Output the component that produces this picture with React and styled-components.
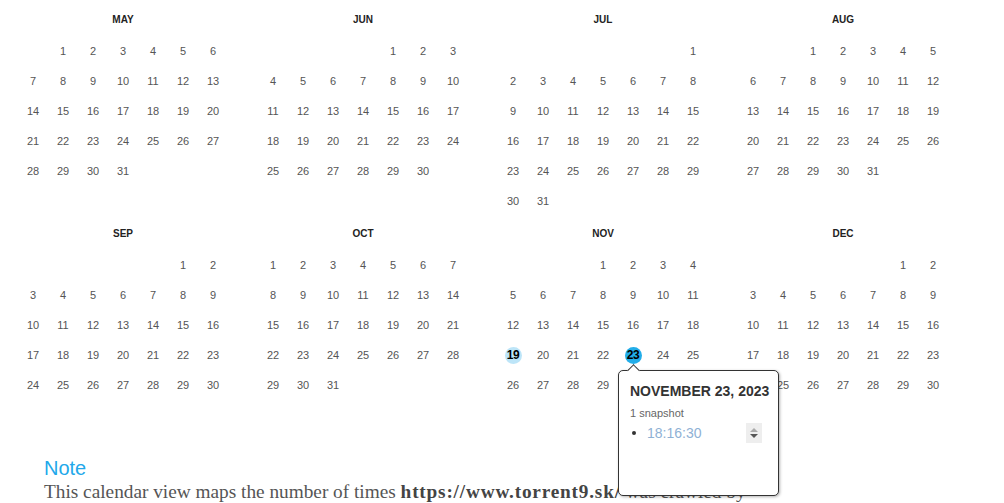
import React from 'react';
import styled, { createGlobalStyle } from 'styled-components';

const GlobalStyle = createGlobalStyle`
  body {
    margin: 0;
    background: #fff;
    font-family: "Liberation Sans", Arial, sans-serif;
  }
`;

const Page = styled.div`
  width: 1004px;
  height: 503px;
  overflow: hidden;
`;

const YearGrid = styled.div`
  display: grid;
  grid-template-columns: repeat(4, 240px);
  row-gap: 10px;
  padding: 12px 0 0 3px;
`;

const Month = styled.div`
  display: flex;
  flex-direction: column;
  align-items: center;
`;

const MonthTitle = styled.div`
  font-size: 10px;
  line-height: 16px;
  font-weight: bold;
  color: #222;
  margin-bottom: 8px;
`;

const Days = styled.div`
  display: grid;
  grid-template-columns: repeat(7, 30px);
  grid-auto-rows: 30px;
  height: 180px;
`;

const Day = styled.div`
  position: relative;
  display: flex;
  align-items: center;
  justify-content: center;
  font-size: 11px;
  color: #555;
`;

const Dot = styled.span`
  display: flex;
  align-items: center;
  justify-content: center;
  width: 17px;
  height: 17px;
  border-radius: 50%;
  background: ${p => (p.$strong ? '#22ade9' : '#bde5f8')};
  color: #000;
  font-weight: bold;
  font-size: 12px;
  letter-spacing: -0.3px;
`;

const Tooltip = styled.div`
  position: absolute;
  left: 0;
  top: 30px;
  z-index: 5;
  box-sizing: border-box;
  width: 161px;
  height: 126px;
  padding: 12px 16px 0 11px;
  background: #fff;
  border: 1px solid #333;
  border-radius: 5px;
  box-shadow: 1px 1px 3px rgba(0, 0, 0, 0.3);

  &::before {
    content: '';
    position: absolute;
    left: 10px;
    top: -5px;
    width: 8px;
    height: 8px;
    background: #fff;
    border-left: 1px solid #333;
    border-top: 1px solid #333;
    transform: rotate(45deg);
  }
`;

const TipTitle = styled.div`
  font-size: 14px;
  line-height: 16px;
  font-weight: bold;
  color: #333;
  white-space: nowrap;
`;

const TipCount = styled.div`
  margin-top: 7px;
  font-size: 11px;
  line-height: 14px;
  color: #666;
`;

const SnapRow = styled.div`
  display: flex;
  align-items: center;
  margin-top: 3px;
  height: 20px;
`;

const Bullet = styled.span`
  width: 4px;
  height: 4px;
  border-radius: 50%;
  background: #333;
  margin: 0 11px 0 2px;
`;

const SnapLink = styled.span`
  font-size: 14px;
  color: #8fb1d5;
  flex: 1;
`;

const Spinner = styled.div`
  width: 16px;
  height: 20px;
  background: #eee;
  display: flex;
  flex-direction: column;
  align-items: center;
  justify-content: center;
  gap: 2px;
`;

const Arrow = styled.span`
  width: 0;
  height: 0;
  border-left: 4px solid transparent;
  border-right: 4px solid transparent;
  ${p => (p.$up
    ? 'border-bottom: 4px solid #aaa;'
    : 'border-top: 4px solid #555;')}
`;

const Note = styled.div`
  padding: 27px 0 0 44px;
`;

const NoteTitle = styled.div`
  font-size: 20px;
  line-height: 23px;
  color: #22a8ea;
`;

const NoteText = styled.p`
  margin: 0;
  width: 716px;
  font-family: "Liberation Serif", "Times New Roman", serif;
  font-size: 19.3px;
  line-height: 24px;
  color: #555;

  b {
    color: #444;
    letter-spacing: 0.8px;
  }
`;

const MONTHS = ['JAN', 'FEB', 'MAR', 'APR', 'MAY', 'JUN', 'JUL', 'AUG', 'SEP', 'OCT', 'NOV', 'DEC'];

const captures = {
  '10-19': { strong: false },
  '10-23': { strong: true, tooltip: true },
};

const MonthCalendar = ({ month }) => {
  const first = new Date(2023, month, 1).getDay();
  const count = new Date(2023, month + 1, 0).getDate();
  const cells = [];
  for (let i = 0; i < first; i++) cells.push(<Day key={`e${i}`} />);
  for (let d = 1; d <= count; d++) {
    const cap = captures[`${month}-${d}`];
    cells.push(
      <Day key={d}>
        {cap ? <Dot $strong={cap.strong}>{d}</Dot> : d}
        {cap && cap.tooltip && (
          <Tooltip>
            <TipTitle>NOVEMBER 23, 2023</TipTitle>
            <TipCount>1 snapshot</TipCount>
            <SnapRow>
              <Bullet />
              <SnapLink>18:16:30</SnapLink>
              <Spinner>
                <Arrow $up />
                <Arrow />
              </Spinner>
            </SnapRow>
          </Tooltip>
        )}
      </Day>
    );
  }
  return (
    <Month>
      <MonthTitle>{MONTHS[month]}</MonthTitle>
      <Days>{cells}</Days>
    </Month>
  );
};

const App = () => (
  <Page>
    <GlobalStyle />
    <YearGrid>
      {[4, 5, 6, 7, 8, 9, 10, 11].map(m => (
        <MonthCalendar key={m} month={m} />
      ))}
    </YearGrid>
    <Note>
      <NoteTitle>Note</NoteTitle>
      <NoteText>
        This calendar view maps the number of times <b>https://www.torrent9.sk/</b> was crawled by
        the Wayback Machine, not how many times the site was actually updated.
      </NoteText>
    </Note>
  </Page>
);

export default App;
